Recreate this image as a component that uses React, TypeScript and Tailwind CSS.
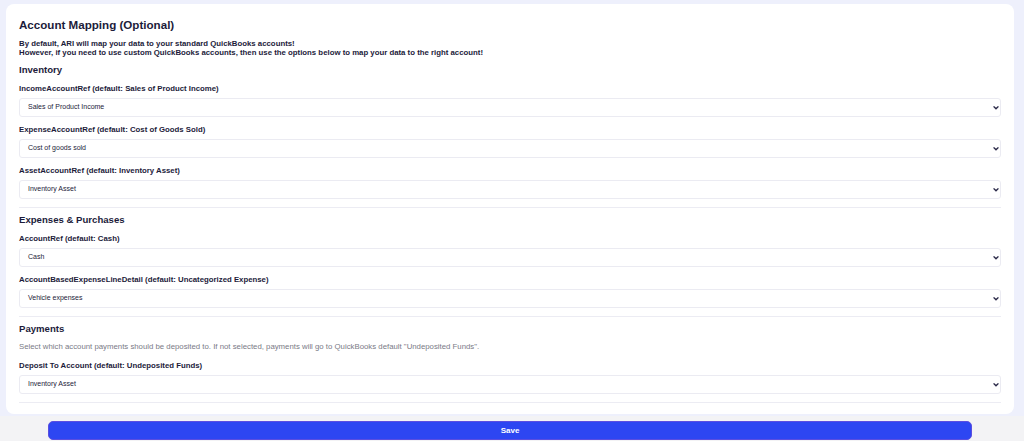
import React from 'react'

interface Field {
  label: string
  value: string
}

interface Section {
  title: string
  description?: string
  fields: Field[]
}

const sections: Section[] = [
  {
    title: 'Inventory',
    fields: [
      { label: 'IncomeAccountRef (default: Sales of Product Income)', value: 'Sales of Product Income' },
      { label: 'ExpenseAccountRef (default: Cost of Goods Sold)', value: 'Cost of goods sold' },
      { label: 'AssetAccountRef (default: Inventory Asset)', value: 'Inventory Asset' },
    ],
  },
  {
    title: 'Expenses & Purchases',
    fields: [
      { label: 'AccountRef (default: Cash)', value: 'Cash' },
      { label: 'AccountBasedExpenseLineDetail (default: Uncategorized Expense)', value: 'Vehicle expenses' },
    ],
  },
  {
    title: 'Payments',
    description:
      'Select which account payments should be deposited to. If not selected, payments will go to QuickBooks default "Undeposited Funds".',
    fields: [{ label: 'Deposit To Account (default: Undeposited Funds)', value: 'Inventory Asset' }],
  },
]

function SelectBox({ value }: { value: string }) {
  return (
    <div className="relative h-[19px]">
      <div className="flex h-[19px] w-full items-center rounded-[3px] border border-[#ebebf2] bg-white pl-[8px] text-[7px] text-[#1c1b3a]">
        {value}
      </div>
      <svg
        className="pointer-events-none absolute right-[2px] top-[8px] h-[4px] w-[6px]"
        viewBox="0 0 10 7"
        fill="none"
      >
        <path d="M1.5 1.5L5 5L8.5 1.5" stroke="#2a2948" strokeWidth="2.4" strokeLinecap="round" />
      </svg>
    </div>
  )
}

export default function App() {
  return (
    <div
      className="flex h-[441px] flex-col overflow-hidden bg-[#eef0fc] text-[#1c1b3a]"
      style={{ fontFamily: '"Liberation Sans", Arial, sans-serif' }}
    >
      <div className="pl-[6px] pr-[10px] pt-[4px]">
        <div className="rounded-[8px] bg-white px-[13px] pt-[13px] pb-[11px]">
          <h1 className="text-[11.6px] font-bold leading-[16px]">Account Mapping (Optional)</h1>
          <p className="mt-[6px] text-[7.8px] font-bold leading-[9px]">
            By default, ARI will map your data to your standard QuickBooks accounts!
            <br />
            However, if you need to use custom QuickBooks accounts, then use the options below to map your data to the
            right account!
          </p>

          {sections.map((section, i) => (
            <div key={section.title} className={i === 0 ? 'mt-[6px]' : 'pt-[5px]'}>
              <h2 className="text-[9.6px] font-bold leading-[14px]">{section.title}</h2>
              {section.description && (
                <p className="mt-[6px] text-[7.8px] leading-[9px] text-[#7a7a86]">{section.description}</p>
              )}
              <div className={section.description ? 'mt-[10px]' : 'mt-[7px]'}>
                {section.fields.map((field, j) => (
                  <div key={field.label} className={j > 0 ? 'mt-[8px]' : ''}>
                    <div className="text-[7.8px] font-bold leading-[10px]">{field.label}</div>
                    <div className="mt-[4px]">
                      <SelectBox value={field.value} />
                    </div>
                  </div>
                ))}
              </div>
              <div className="mt-[8px] h-px bg-[#ececf3]" />
            </div>
          ))}
        </div>
      </div>

      <div className="mt-[2px] flex-1 bg-[#f3f3f5] pl-[48px] pr-[52px] pt-[5px]">
        <button className="flex h-[19px] w-full items-center justify-center rounded-[5px] border border-[#5b4ee0] bg-[#2d46f2] text-[8px] font-bold text-white">
          Save
        </button>
      </div>
    </div>
  )
}
